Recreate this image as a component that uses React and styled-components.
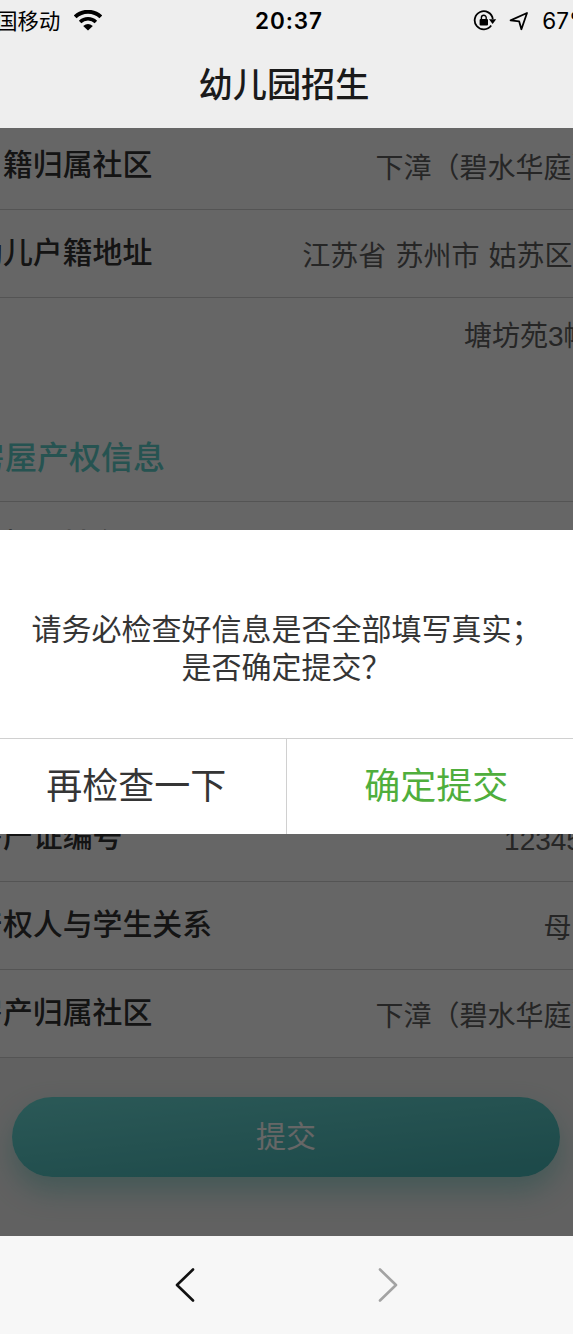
import React from "react";
import styled, { createGlobalStyle } from "styled-components";

const GlobalStyle = createGlobalStyle`
  * { box-sizing: border-box; }
  body { margin: 0; overflow: hidden; }
  button { font: inherit; border: 0; background: none; padding: 0; }
`;

const Screen = styled.div`
  width: 573px;
  height: 1334px;
  overflow: hidden;
  display: flex;
  flex-direction: column;
  font-family: "Liberation Sans", "Noto Sans CJK SC", sans-serif;
  background: #f7f7f7;
`;

const Header = styled.header`
  height: 128px;
  flex: none;
  background: #eeeeee;
  color: #1a1a1a;
`;

const StatusBar = styled.div`
  height: 41px;
  display: grid;
  grid-template-columns: 255px 1fr auto;
  align-items: center;
  font-family: Inter, "Noto Sans CJK SC", sans-serif;
  font-size: 22.5px;
  line-height: 40px;
  color: #000;
  white-space: nowrap;
`;

const Carrier = styled.div`
  display: flex;
  align-items: center;
  gap: 14px;
  margin-left: -25px;
  font-size: 21.3px;
`;

const Clock = styled.div`
  font-weight: 600;
  letter-spacing: 0.9px;
`;

const StatusIcons = styled.div`
  display: flex;
  align-items: center;
  margin-right: -18px;
  svg { flex: none; }
`;

const Battery = styled.span`
  margin-left: 13px;
`;

const Title = styled.h1`
  margin: 0;
  height: 87px;
  line-height: 88px;
  text-align: center;
  font-size: 34.2px;
  font-weight: 500;
  padding-right: 5px;
`;

const Page = styled.main`
  position: relative;
  height: 1108px;
  flex: none;
  overflow: hidden;
  background: #f2f2f2;
`;

const Form = styled.section`
  margin: 0 -26.5px 0 -27px;
  background: #fff;
`;

const Row = styled.div`
  height: ${(p) => p.$height || 88}px;
  display: flex;
  justify-content: space-between;
  border-bottom: ${(p) => (p.$plain ? "0" : "1px solid #d2d2d2")};
  white-space: nowrap;
`;

const Label = styled.span`
  height: 88px;
  line-height: 86px;
  font-size: 29.9px;
  font-weight: 500;
  color: #333;
  margin-top: ${(p) => p.$shift || 0}px;
`;

const Value = styled.span`
  height: 88px;
  line-height: 94px;
  font-size: 28px;
  word-spacing: 1.3px;
  color: #606060;
  margin-left: auto;
  margin-top: ${(p) => p.$shift || 0}px;
  padding-right: ${(p) => p.$trail || 0}px;
`;

const SectionTitle = styled.h2`
  margin: 0;
  height: 88px;
  line-height: 89px;
  border-bottom: 1px solid #d2d2d2;
  font-size: 32px;
  font-weight: 500;
  color: #5fd0cb;
`;

const SubmitArea = styled.div`
  padding: 39px 13px 59px 12px;
`;

const SubmitButton = styled.button`
  width: 100%;
  height: 80px;
  border-radius: 40px;
  background: linear-gradient(174deg, #6adcd8 5%, #4ab8b8 90%);
  box-shadow: 0 14px 28px rgba(78, 196, 185, 0.45);
  color: #fff;
  font-size: 30px;
  line-height: 80px;
`;

const Overlay = styled.div`
  position: absolute;
  inset: 0;
  display: flex;
  flex-direction: column;
  padding-top: 402px;
  background: rgba(0, 0, 0, 0.6);
`;

const Dialog = styled.div`
  height: 304px;
  margin: 0 -12px 0 -14px;
  background: #fff;
  display: flex;
  flex-direction: column;
`;

const Message = styled.p`
  margin: 0;
  flex: 1;
  padding: 78px 0 0 2px;
  text-align: center;
  font-size: 30px;
  line-height: 38px;
  color: #353535;
  font-family: "Noto Sans CJK SC", sans-serif;
`;

const Actions = styled.div`
  display: grid;
  grid-template-columns: 1fr 1fr;
  height: 96px;
  border-top: 1px solid #d0d0d0;
`;

const Action = styled.button`
  font-size: 36px;
  line-height: 94px;
  padding-left: 1px;
  color: ${(p) => (p.$primary ? "#4fae3c" : "#353535")};
  & + & { border-left: 1px solid #d0d0d0; }
`;

const Toolbar = styled.nav`
  flex: 1;
  display: flex;
  justify-content: center;
  align-items: center;
  gap: 179px;
  background: #f7f7f7;
`;

const NavButton = styled.button`
  width: 24px;
  height: 36px;
  color: ${(p) => (p.$disabled ? "#a3a3a3" : "#111")};
`;

const Wifi = () => (
  <svg width="28" height="22" viewBox="0 0 28 22">
    <path d="M1.2 6.9a18.4 18.4 0 0 1 25.6 0" fill="none" stroke="#000" strokeWidth="3.9" />
    <path d="M6.1 12a11.4 11.4 0 0 1 15.8 0" fill="none" stroke="#000" strokeWidth="3.5" />
    <path d="M14 20.5l-4.8-4.5q4.8-3.8 9.6 0z" />
  </svg>
);

const RotationLock = () => (
  <svg width="24" height="22" viewBox="0 0 24 22">
    <path d="M18.2 15.6A9.1 9.1 0 1 1 19.8 9" fill="none" stroke="#000" strokeWidth="1.8" />
    <path d="M16 9.3h7.2l-3.6 4.6z" />
    <rect x="6.6" y="9" width="8.4" height="6.6" rx="1" />
    <path d="M8.4 9.8V7.6a2.4 2.4 0 0 1 4.8 0v2.2" fill="none" stroke="#000" strokeWidth="1.4" />
  </svg>
);

const ArrowIcon = styled.svg`
  margin-left: 12px;
`;

const LocationArrow = () => (
  <ArrowIcon width="20" height="20" viewBox="0 0 20 20">
    <path d="M1.6 9.4L18 2l-5.6 16.2-2.2-7.8z" fill="none" stroke="#000" strokeWidth="1.8" strokeLinejoin="round" />
  </ArrowIcon>
);

const Chevron = ({ forward }) => (
  <svg width="24" height="36" viewBox="0 0 24 36">
    <path
      d={forward ? "M4 2.5L20 18 4 33.5" : "M20 2.5L4 18 20 33.5"}
      fill="none"
      stroke="currentColor"
      strokeWidth="2.6"
      strokeLinecap="round"
      strokeLinejoin="round"
    />
  </svg>
);

export default function App() {
  return (
    <Screen>
      <GlobalStyle />
      <Header>
        <StatusBar>
          <Carrier>中国移动<Wifi /></Carrier>
          <Clock>20:37</Clock>
          <StatusIcons>
            <RotationLock />
            <LocationArrow />
            <Battery>67%</Battery>
          </StatusIcons>
        </StatusBar>
        <Title>幼儿园招生</Title>
      </Header>
      <Page>
        <Form>
          <Row $height={82}>
            <Label $shift={-6}>户籍归属社区</Label>
            <Value $shift={-6}>下漳（碧水华庭）</Value>
          </Row>
          <Row>
            <Label>幼儿户籍地址</Label>
            <Value $trail={27}>江苏省 苏州市 姑苏区</Value>
          </Row>
          <Row $height={116} $plain>
            <Value $shift={-8} $trail={8}>塘坊苑3幢</Value>
          </Row>
          <SectionTitle>房屋产权信息</SectionTitle>
          <Row>
            <Label>产权人姓名</Label>
          </Row>
          <Row $height={116} $plain />
          <Row />
          <Row>
            <Label>房产证编号</Label>
            <Value $trail={2}>123456</Value>
          </Row>
          <Row>
            <Label>产权人与学生关系</Label>
            <Value>母亲</Value>
          </Row>
          <Row>
            <Label>房产归属社区</Label>
            <Value>下漳（碧水华庭）</Value>
          </Row>
        </Form>
        <SubmitArea>
          <SubmitButton>提交</SubmitButton>
        </SubmitArea>
        <Overlay>
          <Dialog>
            <Message>
              请务必检查好信息是否全部填写真实；
              <br />
              是否确定提交？
            </Message>
            <Actions>
              <Action>再检查一下</Action>
              <Action $primary>确定提交</Action>
            </Actions>
          </Dialog>
        </Overlay>
      </Page>
      <Toolbar>
        <NavButton><Chevron /></NavButton>
        <NavButton $disabled><Chevron forward /></NavButton>
      </Toolbar>
    </Screen>
  );
}
